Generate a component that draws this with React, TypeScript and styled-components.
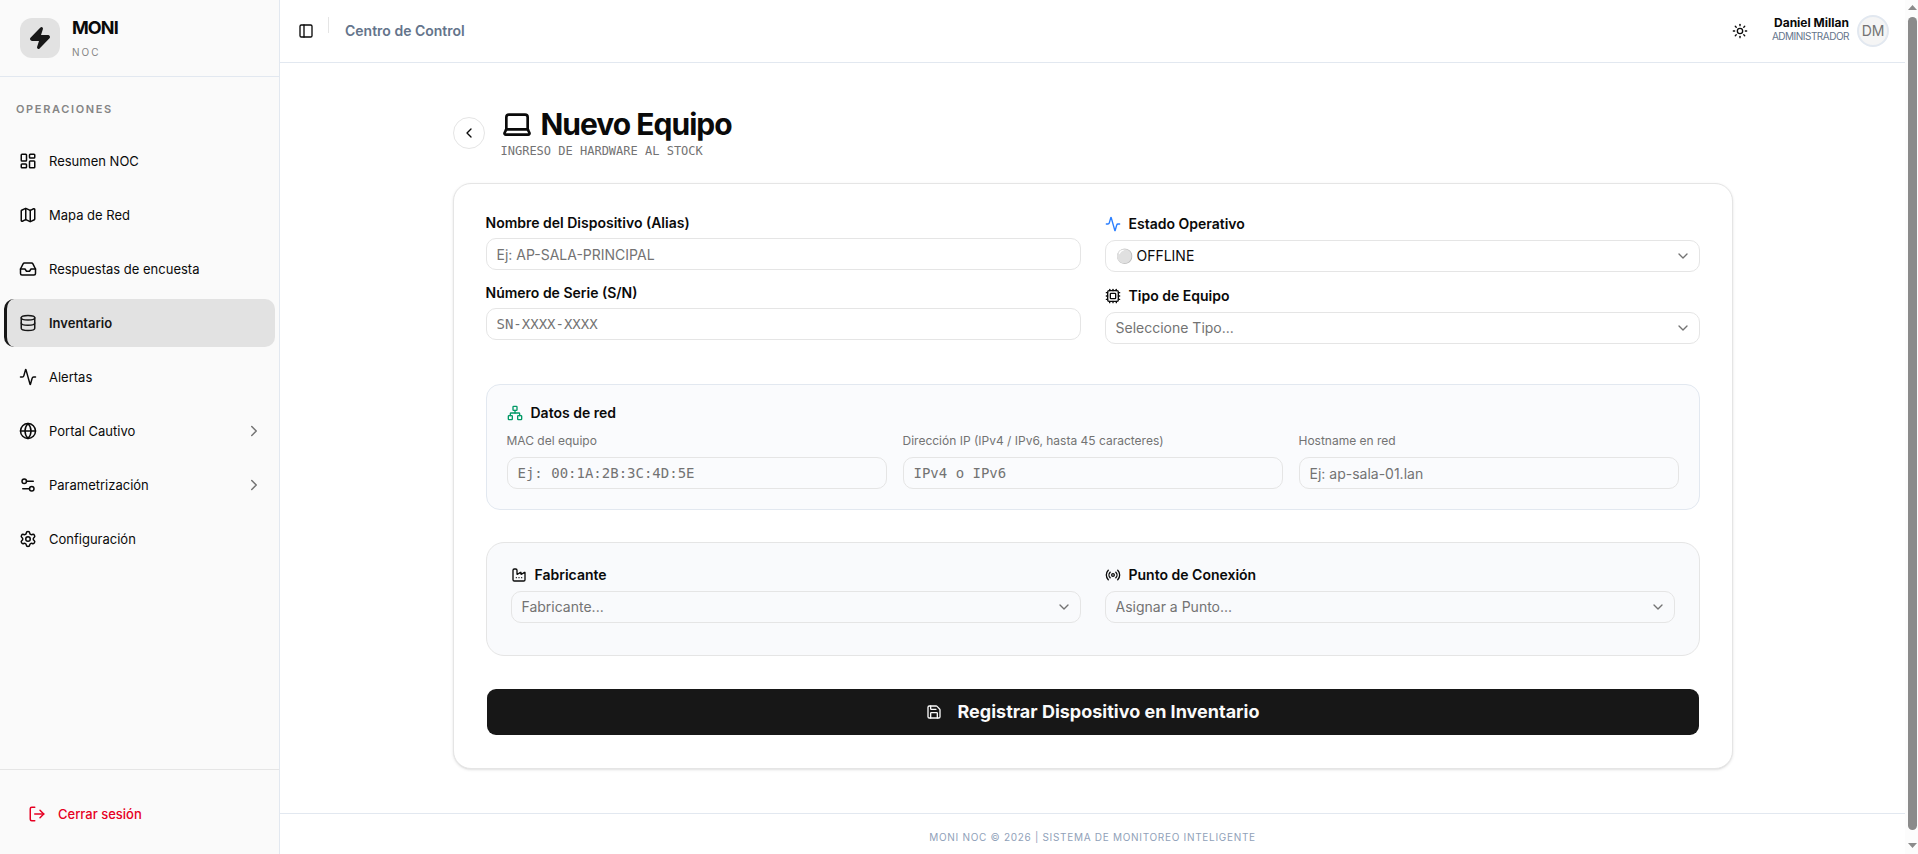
import React from 'react';
import styled, { createGlobalStyle } from 'styled-components';
import {
  Activity,
  ChevronDown,
  ChevronLeft,
  ChevronRight,
  Cpu,
  Database,
  Factory,
  Globe,
  Inbox,
  Laptop,
  LayoutDashboard,
  LogOut,
  Map as MapIcon,
  Network,
  PanelLeft,
  Radio,
  Save,
  Settings,
  Settings2,
  Sun,
  Zap,
} from 'lucide-react';

const sans = '"Inter", "Liberation Sans", sans-serif';
const mono = '"DejaVu Sans Mono", "Liberation Mono", monospace';

const color = {
  ink: '#0a0a0a',
  muted: '#737373',
  border: '#e5e5e5',
  line: '#e2e8f0',
  slate: '#64748b',
  sidebar: '#fafafa',
  accent: '#e2e2e2',
};

const GlobalStyle = createGlobalStyle`
  *, *::before, *::after { box-sizing: border-box; }
  body {
    margin: 0;
    height: 100vh;
    overflow: hidden;
    background: #fff;
    color: ${color.ink};
    font-family: ${sans};
    font-size: 14px;
    line-height: 20px;
  }
  button, input, select { font: inherit; color: inherit; margin: 0; }
  button { cursor: pointer; }
  h1, p { margin: 0; }
  svg { flex-shrink: 0; display: block; }
`;

const Shell = styled.div`
  display: flex;
  height: 100vh;
`;

const Sidebar = styled.aside`
  display: flex;
  flex-direction: column;
  flex: 0 0 280px;
  background: ${color.sidebar};
  border-right: 1px solid ${color.line};
`;

const Brand = styled.div`
  display: flex;
  align-items: center;
  gap: 12px;
  padding: 16px 20px;
  border-bottom: 1px solid ${color.line};
`;

const BrandMark = styled.div`
  display: grid;
  place-items: center;
  width: 40px;
  height: 40px;
  border-radius: 12px;
  background: ${color.accent};
  color: #171717;
`;

const BrandText = styled.div`
  display: flex;
  flex-direction: column;
  gap: 4px;
`;

const BrandName = styled.span`
  font-size: 18px;
  line-height: 24px;
  font-weight: 700;
  letter-spacing: -0.05em;
`;

const BrandSub = styled.span`
  font-size: 10px;
  line-height: 16px;
  letter-spacing: 0.2em;
  color: #858585;
`;

const SideNav = styled.nav`
  flex: 1;
  padding: 24px 4px;
`;

const NavHeading = styled.p`
  padding: 0 12px;
  font-size: 11px;
  line-height: 16px;
  font-weight: 600;
  letter-spacing: 0.15em;
  color: #858585;
`;

const NavList = styled.ul`
  display: flex;
  flex-direction: column;
  gap: 6px;
  margin: 0;
  padding: 20px 0 0;
  list-style: none;
`;

const NavLink = styled.a<{ $active?: boolean }>`
  display: flex;
  align-items: center;
  gap: 12px;
  height: 48px;
  padding: 0 12px;
  border-left: 3px solid ${(p) => (p.$active ? '#171717' : 'transparent')};
  border-radius: 10px;
  background: ${(p) => (p.$active ? color.accent : 'transparent')};
  color: ${(p) => (p.$active ? '#171717' : color.ink)};
  font-size: 13px;
  font-weight: ${(p) => (p.$active ? 600 : 400)};
  text-decoration: none;
`;

const NavLabel = styled.span`
  flex: 1;
`;

const NavArrow = styled(ChevronRight)`
  color: ${color.muted};
`;

const SideFooter = styled.div`
  padding: 20px 16px 16px;
  border-top: 1px solid ${color.border};
`;

const LogoutButton = styled.button`
  display: flex;
  align-items: center;
  gap: 12px;
  width: 100%;
  height: 48px;
  padding: 0 12px;
  border: 0;
  background: none;
  color: #e60023;
  font-size: 13px;
  font-weight: 500;
`;

const Page = styled.div`
  display: flex;
  flex-direction: column;
  flex: 1;
  min-width: 0;
`;

const TopBar = styled.header`
  display: flex;
  align-items: center;
  justify-content: space-between;
  height: 63px;
  padding: 0 16px 0 10px;
  border-bottom: 1px solid ${color.line};
`;

const TopGroup = styled.div`
  display: flex;
  align-items: center;
`;

const IconButton = styled.button`
  display: grid;
  place-items: center;
  width: 32px;
  height: 32px;
  padding: 0;
  border: 0;
  background: none;
`;

const Divider = styled.span`
  align-self: flex-start;
  width: 1px;
  height: 16px;
  margin: 2px 16px 0 6px;
  background: ${color.border};
`;

const TopTitle = styled.span`
  font-weight: 600;
  color: ${color.slate};
`;

const UserText = styled.div`
  display: flex;
  flex-direction: column;
  align-items: flex-end;
  padding: 0 8px 6px 16px;
`;

const UserName = styled.span`
  font-size: 12px;
  line-height: 16px;
  font-weight: 700;
`;

const UserRole = styled.span`
  font-size: 10px;
  line-height: 10px;
  letter-spacing: -0.05em;
  color: ${color.slate};
`;

const Avatar = styled.span`
  display: grid;
  place-items: center;
  width: 32px;
  height: 32px;
  border: 2px solid ${color.line};
  border-radius: 50%;
  background: #f5f5f5;
  color: ${color.muted};
`;

const Content = styled.main`
  flex: 1;
  width: 100%;
  max-width: 1328px;
  margin: 0 auto;
  padding: 40px 24px;
`;

const PageHead = styled.div`
  display: flex;
  align-items: center;
  gap: 16px;
  padding-bottom: 24px;
`;

const BackButton = styled.button`
  display: grid;
  place-items: center;
  width: 32px;
  height: 32px;
  margin-top: 4px;
  padding: 0;
  border: 1px solid ${color.border};
  border-radius: 50%;
  background: #fff;
`;

const Title = styled.h1`
  display: flex;
  align-items: center;
  gap: 8px;
  padding-top: 2px;
  font-size: 30px;
  line-height: 38px;
  font-weight: 700;
  letter-spacing: -1px;
`;

const Subtitle = styled.p`
  font-family: ${mono};
  font-size: 12px;
  line-height: 16px;
  text-transform: uppercase;
  color: ${color.muted};
`;

const Card = styled.form`
  display: flex;
  flex-direction: column;
  gap: 32px;
  padding: 32px;
  border: 1px solid ${color.border};
  border-radius: 18px;
  background: #fff;
  box-shadow: 0 1px 3px rgba(0, 0, 0, 0.1), 0 1px 2px -1px rgba(0, 0, 0, 0.1);
`;

const Columns = styled.div<{ $count: number; $gap: number }>`
  display: grid;
  grid-template-columns: repeat(${(p) => p.$count}, minmax(0, 1fr));
  gap: ${(p) => p.$gap}px;
`;

const MainColumns = styled(Columns)`
  padding-bottom: 8px;
`;

const Stack = styled.div`
  display: flex;
  flex-direction: column;
  gap: 16px;
`;

const FieldBox = styled.div`
  display: flex;
  flex-direction: column;
  gap: 8px;
`;

const FieldLabel = styled.label`
  display: flex;
  align-items: center;
  gap: 8px;
  line-height: 14px;
  font-weight: 600;
`;

const SmallLabel = styled.label`
  font-size: 12px;
  line-height: 16px;
  color: ${color.muted};
`;

const TextInput = styled.input<{ $mono?: boolean }>`
  width: 100%;
  height: 32px;
  padding: 0 10px;
  border: 1px solid ${color.border};
  border-radius: 10px;
  background: transparent;
  font-family: ${(p) => (p.$mono ? mono : sans)};
  &::placeholder { color: ${color.muted}; opacity: 1; }
`;

const SelectBox = styled.div`
  display: grid;
  align-items: center;
  > * { grid-area: 1 / 1; }
`;

const SelectInput = styled.select<{ $empty?: boolean }>`
  appearance: none;
  width: 100%;
  height: 32px;
  padding: 0 32px 0 10px;
  border: 1px solid ${color.border};
  border-radius: 10px;
  background: transparent;
  color: ${(p) => (p.$empty ? color.muted : color.ink)};
`;

const SelectArrow = styled(ChevronDown)`
  justify-self: end;
  margin-right: 9px;
  color: ${color.muted};
  pointer-events: none;
`;

const NetworkPanel = styled.section`
  display: flex;
  flex-direction: column;
  gap: 12px;
  padding: 20px;
  border: 1px solid ${color.line};
  border-radius: 14px;
  background: #fafbfd;
`;

const PanelTitle = styled.div`
  display: flex;
  align-items: center;
  gap: 8px;
  line-height: 16px;
  font-weight: 600;
`;

const LinkPanel = styled.section`
  padding: 24px 24px 32px;
  border: 1px solid ${color.border};
  border-radius: 18px;
  background: #f9fafc;
`;

const SubmitButton = styled.button`
  display: flex;
  align-items: center;
  justify-content: center;
  gap: 16px;
  height: 48px;
  border: 1px solid transparent;
  border-radius: 10px;
  background: #171717;
  background-clip: padding-box;
  color: #fafafa;
  font-size: 18px;
  font-weight: 700;
`;

const Footer = styled.footer`
  padding: 16px 16px 9px;
  border-top: 1px solid ${color.line};
  text-align: center;
  font-size: 10px;
  line-height: 15px;
  letter-spacing: 0.07em;
  text-transform: uppercase;
  color: #90a1b9;
`;

const ScrollTrack = styled.div`
  display: flex;
  flex-direction: column;
  align-items: center;
  justify-content: space-between;
  flex: 0 0 13px;
  padding: 5px 0 6px 2px;
  background: #fcfcfc;
`;

const ScrollThumb = styled.div`
  flex: 1;
  width: 9px;
  margin: 7px 0 13px;
  border-radius: 5px;
  background: #8b8b8b;
`;

type Item = { label: string; icon: typeof Zap; active?: boolean; nested?: boolean };

const items: Item[] = [
  { label: 'Resumen NOC', icon: LayoutDashboard },
  { label: 'Mapa de Red', icon: MapIcon },
  { label: 'Respuestas de encuesta', icon: Inbox },
  { label: 'Inventario', icon: Database, active: true },
  { label: 'Alertas', icon: Activity },
  { label: 'Portal Cautivo', icon: Globe, nested: true },
  { label: 'Parametrización', icon: Settings2, nested: true },
  { label: 'Configuración', icon: Settings },
];

type TextProps = { id: string; label: string; placeholder: string; mono?: boolean; small?: boolean };

function TextField({ id, label, placeholder, mono: isMono, small }: TextProps) {
  const Label = small ? SmallLabel : FieldLabel;
  return (
    <FieldBox>
      <Label htmlFor={id}>{label}</Label>
      <TextInput id={id} placeholder={placeholder} $mono={isMono} />
    </FieldBox>
  );
}

type SelectProps = { id: string; label: string; value: string; icon: React.ReactNode; empty?: boolean };

function SelectField({ id, label, value, icon, empty }: SelectProps) {
  return (
    <FieldBox>
      <FieldLabel htmlFor={id}>
        {icon}
        {label}
      </FieldLabel>
      <SelectBox>
        <SelectInput id={id} $empty={empty}>
          <option>{value}</option>
        </SelectInput>
        <SelectArrow size={16} />
      </SelectBox>
    </FieldBox>
  );
}

export default function App() {
  return (
    <>
      <GlobalStyle />
      <Shell>
        <Sidebar>
          <Brand>
            <BrandMark>
              <Zap size={24} fill="currentColor" />
            </BrandMark>
            <BrandText>
              <BrandName>MONI</BrandName>
              <BrandSub>NOC</BrandSub>
            </BrandText>
          </Brand>
          <SideNav aria-label="Operaciones">
            <NavHeading>OPERACIONES</NavHeading>
            <NavList>
              {items.map(({ label, icon: Icon, active, nested }) => (
                <li key={label}>
                  <NavLink href="#" $active={active}>
                    <Icon size={18} />
                    <NavLabel>{label}</NavLabel>
                    {nested && <NavArrow size={18} />}
                  </NavLink>
                </li>
              ))}
            </NavList>
          </SideNav>
          <SideFooter>
            <LogoutButton type="button">
              <LogOut size={18} />
              Cerrar sesión
            </LogoutButton>
          </SideFooter>
        </Sidebar>

        <Page>
          <TopBar>
            <TopGroup>
              <IconButton type="button" aria-label="Alternar menú">
                <PanelLeft size={16} />
              </IconButton>
              <Divider />
              <TopTitle>Centro de Control</TopTitle>
            </TopGroup>
            <TopGroup>
              <IconButton type="button" aria-label="Cambiar tema">
                <Sun size={16} />
              </IconButton>
              <UserText>
                <UserName>Daniel Millan</UserName>
                <UserRole>ADMINISTRADOR</UserRole>
              </UserText>
              <Avatar>DM</Avatar>
            </TopGroup>
          </TopBar>

          <Content>
            <PageHead>
              <BackButton type="button" aria-label="Volver">
                <ChevronLeft size={16} />
              </BackButton>
              <div>
                <Title>
                  <Laptop size={32} />
                  Nuevo Equipo
                </Title>
                <Subtitle>Ingreso de hardware al stock</Subtitle>
              </div>
            </PageHead>

            <Card>
              <MainColumns $count={2} $gap={24}>
                <Stack>
                  <TextField id="alias" label="Nombre del Dispositivo (Alias)" placeholder="Ej: AP-SALA-PRINCIPAL" />
                  <TextField id="serie" label="Número de Serie (S/N)" placeholder="SN-XXXX-XXXX" mono />
                </Stack>
                <Stack>
                  <SelectField id="estado" label="Estado Operativo" value="⚪ OFFLINE" icon={<Activity size={16} color="#2b7fff" />} />
                  <SelectField id="tipo" label="Tipo de Equipo" value="Seleccione Tipo..." icon={<Cpu size={16} />} empty />
                </Stack>
              </MainColumns>

              <NetworkPanel>
                <PanelTitle>
                  <Network size={16} color="#009966" />
                  Datos de red
                </PanelTitle>
                <Columns $count={3} $gap={16}>
                  <TextField id="mac" label="MAC del equipo" placeholder="Ej: 00:1A:2B:3C:4D:5E" mono small />
                  <TextField id="ip" label="Dirección IP (IPv4 / IPv6, hasta 45 caracteres)" placeholder="IPv4 o IPv6" mono small />
                  <TextField id="host" label="Hostname en red" placeholder="Ej: ap-sala-01.lan" small />
                </Columns>
              </NetworkPanel>

              <LinkPanel>
                <Columns $count={2} $gap={24}>
                  <SelectField id="fabricante" label="Fabricante" value="Fabricante..." icon={<Factory size={16} />} empty />
                  <SelectField id="punto" label="Punto de Conexión" value="Asignar a Punto..." icon={<Radio size={16} />} empty />
                </Columns>
              </LinkPanel>

              <SubmitButton type="submit">
                <Save size={16} />
                Registrar Dispositivo en Inventario
              </SubmitButton>
            </Card>
          </Content>

          <Footer>MONI NOC © 2026 | Sistema de monitoreo inteligente</Footer>
        </Page>

        <ScrollTrack aria-hidden="true">
          <svg width="9" height="5" viewBox="0 0 9 5" fill="#8b8b8b">
            <path d="M4.5 0 9 5H0Z" />
          </svg>
          <ScrollThumb />
          <svg width="9" height="5" viewBox="0 0 9 5" fill="#8b8b8b">
            <path d="M4.5 5 0 0h9Z" />
          </svg>
        </ScrollTrack>
      </Shell>
    </>
  );
}
